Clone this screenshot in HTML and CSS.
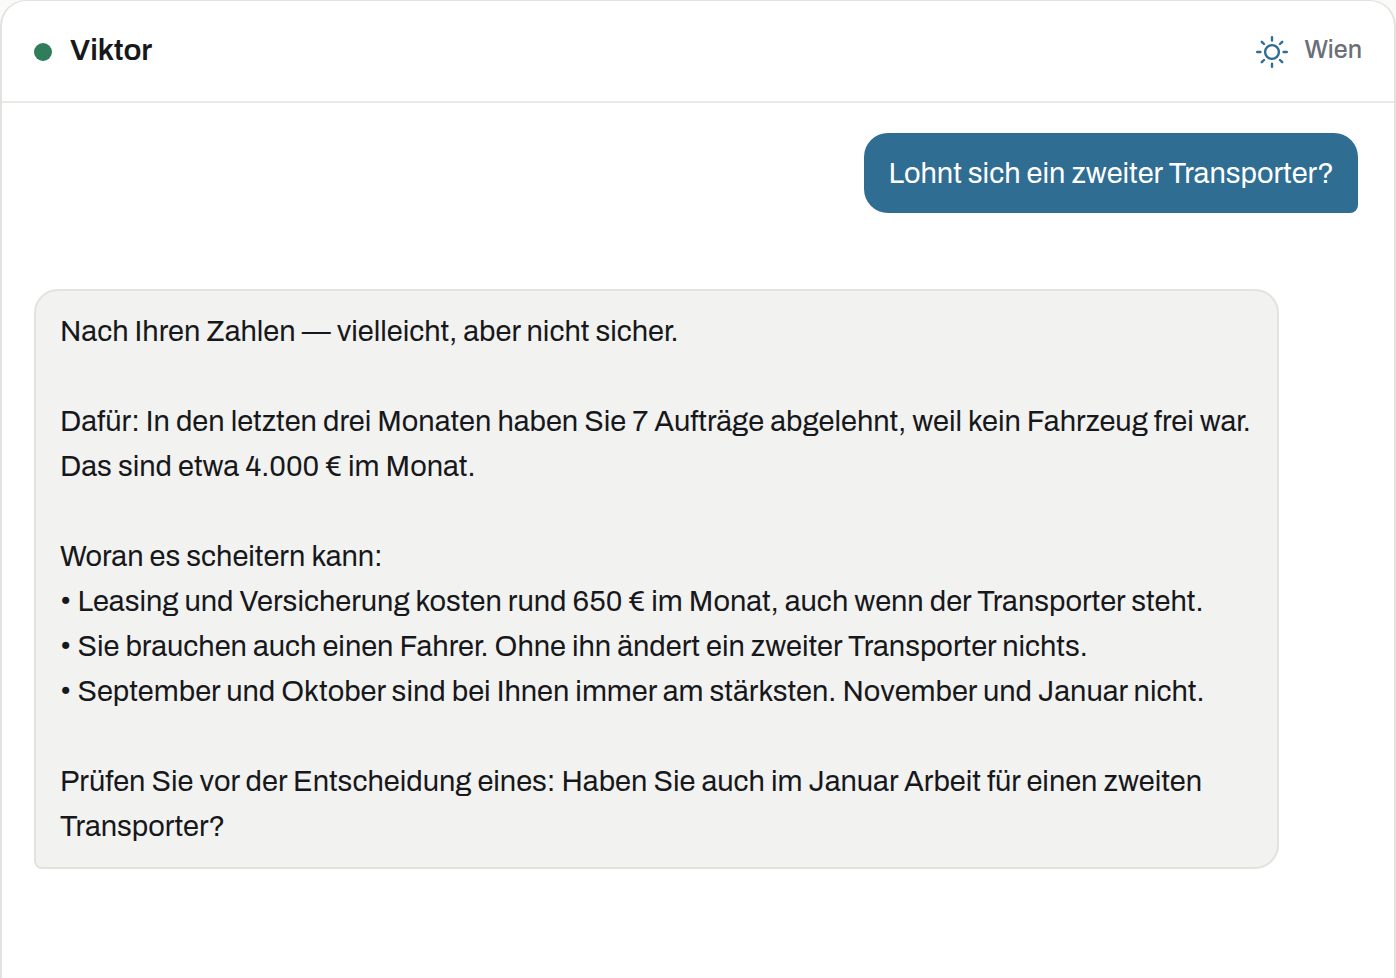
FILE: index.html
```html
<!DOCTYPE html>
<html lang="de">
<head>
    <meta charset="UTF-8">
    <meta name="viewport" content="width=device-width, initial-scale=1.0">
    <title>Viktor</title>
    <link rel="stylesheet" href="styles.css">
</head>
<body>
    <main class="chat">
        <header class="chat-header">
            <span class="status-dot"></span>
            <h1 class="chat-name">Viktor</h1>
            <div class="weather">
                <svg class="weather-icon" viewBox="0 0 32 32" fill="none" stroke="currentColor" stroke-width="2.4" stroke-linecap="round" aria-hidden="true">
                    <circle cx="16" cy="16" r="6.9"/>
                    <path d="M16 1.2v3.2M16 27.6v3.2M1.2 16h3.2M27.6 16h3.2M5.8 5.8l2.2 2.2M24 24l2.2 2.2M5.8 26.2L8 24M24 8l2.2-2.2"/>
                </svg>
                <span class="city">Wien</span>
            </div>
        </header>
        <div class="messages">
            <p class="message message-user">Lohnt sich ein zweiter Transporter?</p>
            <div class="message message-bot">Nach Ihren Zahlen — vielleicht, aber nicht sicher.

Dafür: In den letzten drei Monaten haben Sie 7 Aufträge abgelehnt, weil kein Fahrzeug frei war. Das sind etwa 4.000 € im Monat.

Woran es scheitern kann:
• Leasing und Versicherung kosten rund 650 € im Monat, auch wenn der Transporter steht.
• Sie brauchen auch einen Fahrer. Ohne ihn ändert ein zweiter Transporter nichts.
• September und Oktober sind bei Ihnen immer am stärksten. November und Januar nicht.

Prüfen Sie vor der Entscheidung eines: Haben Sie auch im Januar Arbeit für einen zweiten Transporter?</div>
        </div>
    </main>
</body>
</html>
```

FILE: styles.css
```css
* { box-sizing: border-box; }
body { margin: 0; background: #fafaf8; color: #17181c; font-family: Archivo, "Liberation Sans", Arial, sans-serif; }
.chat { min-height: 100vh; background: #fff; border: 2px solid #e2e3df; border-top-width: 1px; border-bottom: 0; border-radius: 26px 26px 0 0; }
.chat-header { display: flex; align-items: center; height: 102px; padding: 2px 32px 0; border-bottom: 2px solid #e9eae6; }
.status-dot { width: 18px; height: 18px; margin-right: 18px; border-radius: 50%; background: #2f7d5b; }
.chat-name { margin: 0; padding-bottom: 4px; font-size: 30px; line-height: 40px; font-weight: 600; }
.weather { display: flex; align-items: center; gap: 16px; margin-left: auto; color: #6b7078; font-size: 25px; line-height: 36px; font-weight: 500; }
.city { padding-bottom: 4px; }
.weather-icon { width: 32px; height: 32px; color: #2f6d93; }
.messages { display: flex; flex-direction: column; gap: 76px; padding: 30px 36px 30px 32px; }
.message { margin: 0; font-size: 29px; line-height: 45px; }
.message-user { align-self: flex-end; padding: 18px 24px 17px; border-radius: 24px 24px 8px 24px; background: #2f6d93; color: #fff; }
.message-bot { align-self: flex-start; max-width: 94%; padding: 18px 24px; border: 2px solid #e2e3df; border-radius: 24px 24px 24px 8px; background: #f2f2f0; white-space: pre-line; }
```
